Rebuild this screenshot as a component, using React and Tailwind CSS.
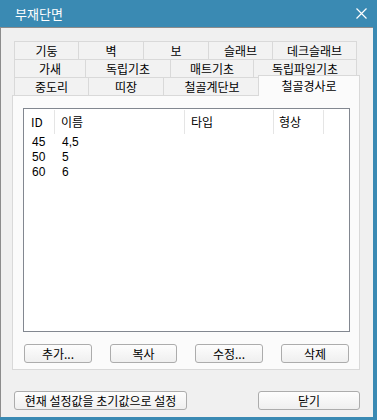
const row1 = [
  ["기둥", 64],
  ["벽", 65],
  ["보", 65],
  ["슬래브", 64],
  ["데크슬래브", 85],
];
const row2 = [
  ["가새", 71],
  ["독립기초", 85],
  ["매트기초", 83],
  ["독립파일기초", 104],
];
const row3 = [
  ["중도리", 74],
  ["띠장", 75],
  ["철골계단보", 97],
];

function Tab({ label, w, last }) {
  return (
    <div
      style={{ width: w }}
      className={`h-[18px] shrink-0 flex items-center justify-center border-t border-l border-[#D9D9D9] bg-[#F2F2F2] leading-none ${last ? "border-r" : ""}`}
    >
      {label}
    </div>
  );
}

function Btn({ children, w }) {
  return (
    <div
      style={{ width: w }}
      className="h-[19px] shrink-0 flex items-center justify-center rounded-[3px] border border-[#ACACAC] bg-linear-to-b from-[#FDFDFD] to-[#EFEFEF] leading-none"
    >
      {children}
    </div>
  );
}

const rows = [
  ["45", "4,5"],
  ["50", "5"],
  ["60", "6"],
];

export default function App() {
  return (
    <div className="w-[377px] h-[420px] bg-[#3A8AB3] flex flex-col font-['Noto_Sans_CJK_KR','Noto_Sans',sans-serif] text-[12px] text-black">
      <div className="h-[27px] shrink-0 flex items-center justify-between pl-[15px] pr-[10px]">
        <span className="text-white text-[13px] leading-none">부재단면</span>
        <svg width="11" height="11" viewBox="0 0 11 11">
          <path d="M0.5 0.5 L10.5 10.5 M10.5 0.5 L0.5 10.5" stroke="white" strokeWidth="1.2" />
        </svg>
      </div>
      <div className="flex-1 mr-[4px] mb-[3px] bg-[#F0F0F0] border-l border-t border-[#8C8C8C] flex flex-col">
        <div className="mt-[13px] pl-[13px] flex flex-col">
          <div className="flex">
            {row1.map(([l, w], i) => (
              <Tab key={l} label={l} w={w} last={i === row1.length - 1} />
            ))}
          </div>
          <div className="flex">
            {row2.map(([l, w], i) => (
              <Tab key={l} label={l} w={w} last={i === row2.length - 1} />
            ))}
          </div>
          <div className="flex items-start">
            {row3.map(([l, w]) => (
              <Tab key={l} label={l} w={w} />
            ))}
            <div className="relative z-10 -ml-[2px] -mt-[2px] -mb-px w-[102px] h-[21px] shrink-0 flex items-center justify-center border-t border-l border-r border-[#D9D9D9] bg-[#FBFBFB] leading-none pb-[1px]">
              철골경사로
            </div>
          </div>
        </div>
        <div className="ml-[11px] w-[348px] h-[275px] border border-[#D9D9D9] bg-[#FBFBFB] pl-[10px] pt-[12px] flex flex-col">
          <div className="w-[327px] h-[224px] border border-[#828790] bg-white flex flex-col">
            <div className="h-[26px] flex items-stretch pt-[1px] pb-[1px]">
              <div className="w-[31px] border-r border-[#E5E5E5] pl-[7px] flex items-center leading-none">ID</div>
              <div className="w-[130px] border-r border-[#E5E5E5] pl-[6px] flex items-center leading-none">이름</div>
              <div className="w-[89px] border-r border-[#E5E5E5] pl-[6px] flex items-center leading-none">타입</div>
              <div className="w-[50px] border-r border-[#E5E5E5] pl-[5px] flex items-center leading-none">형상</div>
            </div>
            {rows.map(([id, name]) => (
              <div key={id} className="h-[15px] flex items-center font-['Liberation_Sans',Arial,sans-serif] leading-[15px]">
                <div className="w-[31px] pl-[8px]">{id}</div>
                <div className="w-[130px] pl-[7px]">{name}</div>
              </div>
            ))}
          </div>
          <div className="mt-[12px] ml-[1px] flex gap-[18px]">
            <Btn w={68}>추가...</Btn>
            <Btn w={67}>복사</Btn>
            <Btn w={68}>수정...</Btn>
            <Btn w={68}>삭제</Btn>
          </div>
        </div>
        <div className="mt-[21px] pl-[13px] flex">
          <Btn w={173}>현재 설정값을 초기값으로 설정</Btn>
          <div className="ml-[71px]">
            <Btn w={102}>닫기</Btn>
          </div>
        </div>
      </div>
    </div>
  );
}
